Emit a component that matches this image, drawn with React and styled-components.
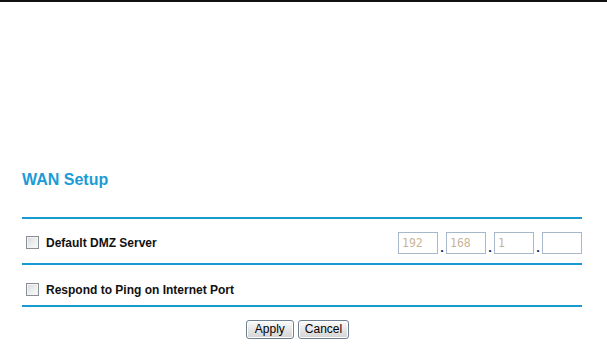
import React from 'react';
import styled, { createGlobalStyle } from 'styled-components';

const GlobalStyle = createGlobalStyle`
    html, body {
        margin: 0;
        padding: 0;
        background: #ffffff;
        font-family: "Liberation Sans", Arial, sans-serif;
    }
`

const TopRule = styled.div`
    height: 2px;
    background: #111;
`

const Content = styled.div`
    width: 560px;
    padding: 169px 0 0 22px;
`

const Title = styled.h1`
    margin: 0 0 28px 0;
    height: 18px;
    line-height: 18px;
    font-size: 16px;
    font-weight: bold;
    color: #1c9bd6;
`

const Rule = styled.div`
    height: 2px;
    background: #169ad2;
`

const Row = styled.div`
    display: flex;
    align-items: center;
    justify-content: space-between;
    box-sizing: border-box;
    height: ${p => p.h}px;
    padding-top: ${p => p.top}px;
`

const Option = styled.label`
    display: flex;
    align-items: center;
    gap: 7px;
    margin-left: 4px;
    font-size: 12px;
    font-weight: bold;
    color: #111;
`

const Box = styled.span`
    display: inline-block;
    box-sizing: border-box;
    width: 13px;
    height: 13px;
    border: 1px solid #8a8f96;
    background: linear-gradient(135deg, #d6d8db 0%, #eceef0 55%, #fbfbfb 100%);
    box-shadow: inset 0 0 0 1px #f4f4f4;
`

const Ip = styled.div`
    display: flex;
    align-items: center;
`

const Octet = styled.input`
    box-sizing: border-box;
    width: 40px;
    height: 22px;
    margin: 0;
    padding: 0 3px;
    border: 1px solid #a9b8c9;
    background: #fff;
    font-family: "DejaVu Sans Mono", "Liberation Mono", monospace;
    font-size: 11.5px;
    color: #c9b596;
    outline: none;
`

const Dot = styled.span`
    width: 8px;
    align-self: flex-end;
    margin-bottom: 2px;
    text-align: center;
    font-size: 13px;
    font-weight: bold;
    line-height: 8px;
    color: #1b1f6b;
`

const Buttons = styled.div`
    display: flex;
    justify-content: center;
    gap: 4px;
    padding: 13px 9px 0 0;
`

const Button = styled.button`
    box-sizing: border-box;
    min-width: 48px;
    height: 19px;
    padding: 0 6px;
    border: 1px solid #6e7f93;
    border-radius: 3px;
    background: linear-gradient(#fbfbfb, #e4e4e4 55%, #d4d4d4);
    box-shadow: inset 0 0 0 1px #fff;
    font-family: "Liberation Sans", Arial, sans-serif;
    font-size: 12px;
    color: #000;
    line-height: 15px;
`

const Checkbox = ({ label }) => (
    <Option>
        <Box />
        {label}
    </Option>
)

const App = () => {
    const octets = ['192', '168', '1', ''];

    return (
        <>
            <GlobalStyle />
            <TopRule />
            <Content>
                <Title>WAN Setup</Title>
                <Rule />
                <Row h={44} top={3}>
                    <Checkbox label="Default DMZ Server" />
                    <Ip>
                        {octets.map((o, i) => (
                            <React.Fragment key={i}>
                                {i > 0 && <Dot>.</Dot>}
                                <Octet defaultValue={o} />
                            </React.Fragment>
                        ))}
                    </Ip>
                </Row>
                <Rule />
                <Row h={40} top={9}>
                    <Checkbox label="Respond to Ping on Internet Port" />
                </Row>
                <Rule />
                <Buttons>
                    <Button>Apply</Button>
                    <Button>Cancel</Button>
                </Buttons>
            </Content>
        </>
    );
}

export default App;
